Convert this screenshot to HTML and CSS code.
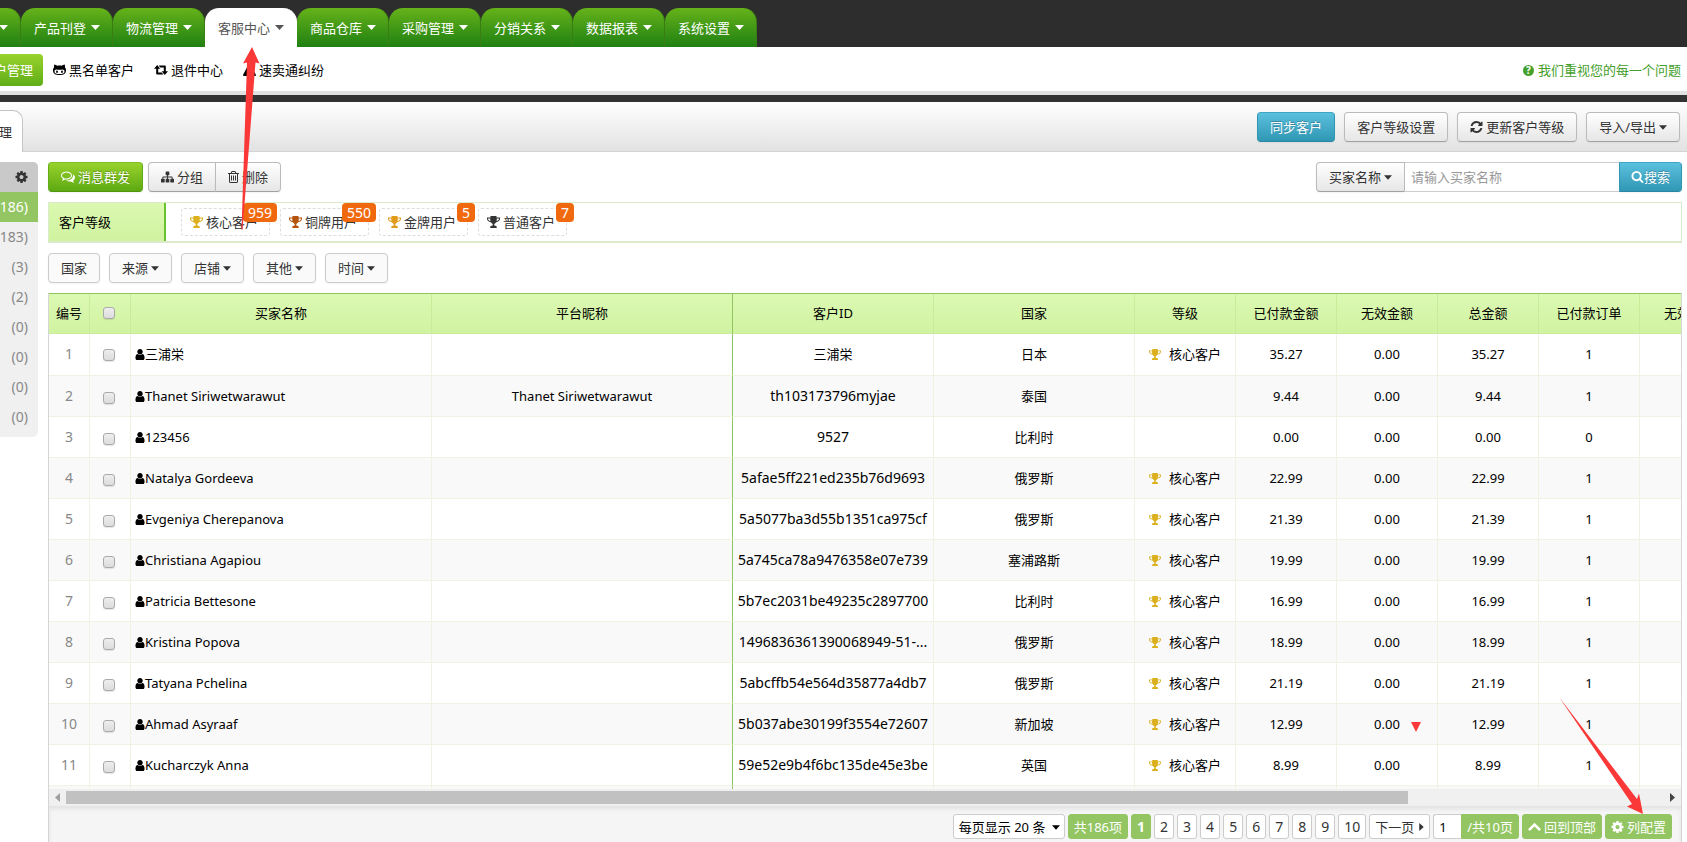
FILE: index.html
```html
<!DOCTYPE html>
<html lang="zh-CN">
    <head>
        <meta charset="utf-8">
        <title>客户管理</title>
        <link rel="stylesheet" href="styles.css">
    </head>
    <body>
        <svg class="sprite" width="0" height="0">
            <symbol id="caret" viewBox="0 0 9 5"><path d="M0 0h9L4.500 5z"/></symbol>
            <symbol id="caret-right" viewBox="0 0 5 9"><path d="M0 0v9l5-4.500z"/></symbol>
            <symbol id="caret-left" viewBox="0 0 5 9"><path d="M5 0v9L0 4.500z"/></symbol>
            <symbol id="user" viewBox="192 128 1408 1536"><path d="M1536 1399q0 109-62.500 187t-150.500 78h-854q-88 0-150.500-78t-62.500-187q0-85 8.500-160.500t31.500-152 58.500-131 94-89 134.500-34.500q131 128 313 128t313-128q76 0 134.500 34.500t94 89 58.500 131 31.500 152 8.500 160.500zm-256-887q0 159-112.500 271.500t-271.500 112.500-271.500-112.500-112.500-271.500 112.500-271.500 271.500-112.500 271.500 112.500 112.500 271.500z"/></symbol>
            <symbol id="trophy" viewBox="0 0 13 12"><path d="M3.500 0h6v1.500H13v1.300c0 1.900-1.700 3.200-3.900 3.500-.5.900-1.100 1.400-1.800 1.700v1.600c1.500.1 2.400.6 2.400 1.400v1H3.300v-1c0-.8.900-1.300 2.400-1.400V8c-.7-.3-1.300-.8-1.800-1.700C1.700 6 0 4.700 0 2.800V1.500h3.500zM1.100 2.500v.4c0 1 .9 1.900 2.400 2.200-.2-.7-.3-1.600-.3-2.600zm8.700 0c0 1-.1 1.900-.3 2.600 1.500-.3 2.400-1.200 2.400-2.200v-.4z"/></symbol>
            <symbol id="cog" viewBox="128 128 1536 1536"><path d="M1152 896q0-106-75-181t-181-75-181 75-75 181 75 181 181 75 181-75 75-181zm512-109v222q0 12-8 23t-20 13l-185 28q-19 54-39 91 35 50 107 138 10 12 10 25t-9 23q-27 37-99 108t-94 71q-12 0-26-9l-138-108q-44 23-91 38-16 136-29 186-7 28-36 28h-222q-14 0-24.500-8.500t-11.500-21.500l-28-184q-49-16-90-37l-141 107q-10 9-25 9-14 0-25-11-126-114-165-168-7-10-7-23 0-12 8-23 15-21 51-66.500t54-70.500q-27-50-41-99l-183-27q-13-2-21-12.500t-8-23.500v-222q0-12 8-23t19-13l186-28q14-46 39-92-40-57-107-138-10-12-10-24 0-10 9-23 26-36 98.500-107.500t94.500-71.500q13 0 26 10l138 107q44-23 91-38 16-136 29-186 7-28 36-28h222q14 0 24.500 8.500t11.500 21.500l28 184q49 16 90 37l142-107q9-9 24-9 13 0 25 10 129 119 165 170 7 8 7 22 0 12-8 23-15 21-51 66.500t-54 70.500q26 50 41 98l183 28q13 2 21 12.500t8 23.500z"/></symbol>
            <symbol id="search" viewBox="64 128 1664 1664"><path d="M1216 832q0-185-131.500-316.500t-316.500-131.500-316.500 131.500-131.500 316.500 131.500 316.500 316.500 131.500 316.500-131.500 131.500-316.500zm512 832q0 52-38 90t-90 38q-54 0-90-38l-343-342q-179 124-399 124-143 0-273.500-55.500t-225-150-150-225-55.500-273.500 55.500-273.500 150-225 225-150 273.500-55.500 273.500 55.500 225 150 150 225 55.500 273.500q0 220-124 399l343 343q37 37 37 90z"/></symbol>
            <symbol id="refresh" viewBox="128 128 1536 1536"><path d="M1639 1056q0 5-1 7-64 268-268 434.500t-478 166.500q-146 0-282.500-55t-243.500-157l-129 129q-19 19-45 19t-45-19-19-45v-448q0-26 19-45t45-19h448q26 0 45 19t19 45-19 45l-137 137q71 66 161 102t187 36q134 0 250-65t186-179q11-17 53-117 8-23 30-23h192q13 0 22.500 9.500t9.500 22.500zm25-800v448q0 26-19 45t-45 19h-448q-26 0-45-19t-19-45 19-45l138-138q-148-137-349-137-134 0-250 65t-186 179q-11 17-53 117-8 23-30 23h-199q-13 0-22.500-9.500t-9.500-22.500v-7q65-268 270-434.500t480-166.500q146 0 284 55.500t245 156.500l130-129q19-19 45-19t45 19 19 45z"/></symbol>
            <symbol id="sitemap" viewBox="0 128 1792 1536"><path d="M1792 1248v320q0 40-28 68t-68 28h-320q-40 0-68-28t-28-68v-320q0-40 28-68t68-28h96v-192h-512v192h96q40 0 68 28t28 68v320q0 40-28 68t-68 28h-320q-40 0-68-28t-28-68v-320q0-40 28-68t68-28h96v-192h-512v192h96q40 0 68 28t28 68v320q0 40-28 68t-68 28h-320q-40 0-68-28t-28-68v-320q0-40 28-68t68-28h96v-192q0-52 38-90t90-38h512v-192h-96q-40 0-68-28t-28-68v-320q0-40 28-68t68-28h320q40 0 68 28t28 68v320q0 40-28 68t-68 28h-96v192h512q52 0 90 38t38 90v192h96q40 0 68 28t28 68z"/></symbol>
            <symbol id="trash" viewBox="192 128 1408 1536"><path d="M576 704h128v640H576zM832 704h128v640H832zM1088 704h128v640h-128zM1344 1460v-948h-896v948q0 22 7 40.500t14.500 27 10.500 8.500h832q3 0 10.500-8.500t14.500-27 7-40.500zm-672-1076h448l-48-117q-7-9-17-11h-317q-10 2-17 11zm928 32v64q0 14-9 23t-23 9h-96v948q0 83-47 143.500t-113 60.500h-832q-66 0-113-58.500t-47-141.500v-952h-96q-14 0-23-9t-9-23v-64q0-14 9-23t23-9h309l70-167q15-37 54-63t79-26h320q40 0 79 26t54 63l70 167h309q14 0 23 9t9 23z"/></symbol>
            <symbol id="comments" viewBox="0 256 1792 1408"><path d="M704 384q-153 0-286 52t-211.500 141-78.500 191q0 82 53 158t149 132l97 56-35 84q34-20 62-39l44-31 53 10q78 14 153 14 153 0 286-52t211.500-141 78.500-191-78.500-191-211.500-141-286-52zm0-128q191 0 353.500 68.500t256.500 186.500 94 257-94 257-256.500 186.500-353.500 68.500q-86 0-176-16-124 88-278 128-36 9-86 16h-3q-11 0-20.500-8t-11.500-21q-1-3-1-6.500t.5-6.500 2-6l2.500-5 3.500-5.500 4-5 4.500-5 4-4.500q5-6 23-25t26-29.500 22.500-29 25-38.500 20.500-44q-124-72-195-177t-71-224q0-139 94-257t256.500-186.500 353.500-68.500zm822 1169q10 24 20.500 44t25 38.500 22.500 29 26 29.500 23 25q1 1 4 4.500t4.500 5 4 5 3.500 5.500l2.500 5 2 6 .5 6.500-1 6.500q-3 14-13 22t-22 7q-50-7-86-16-154-40-278-128-90 16-176 16-271 0-472-132 58 4 88 4 161 0 309-45t264-129q125-92 192-212t67-254q0-77-23-152 129 71 204 178t75 230q0 120-71 224.500t-195 176.500z"/></symbol>
            <symbol id="cat" viewBox="0 0 13 11"><path fill-rule="evenodd" d="M1.300 0C2.400.1 3.400.7 4.100 1.300c1.500-.3 3.300-.3 4.800 0C9.600.7 10.600.1 11.700 0c.4 1 .4 2 .2 2.800C12.700 3.600 13 4.600 13 5.800c0 3.700-2.300 4.700-6.500 4.700S0 9.500 0 5.800c0-1.200.3-2.200 1.100-3C.9 2 .9 1 1.300 0zM3.500 5C2.200 5 1.500 5.900 1.500 7c0 2 1.600 2.500 5 2.500s5-.5 5-2.500c0-1.100-.7-2-2-2-1 0-2 .3-3 .3S4.500 5 3.500 5z"/><ellipse cx="4" cy="7.200" rx=".9" ry="1.300"/><ellipse cx="9" cy="7.200" rx=".9" ry="1.300"/></symbol>
            <symbol id="retweet" viewBox="0 0 14 10"><path d="M3.200 0 6.300 3.700H4.200v3.800h3.600L9.400 9.500H3c-.5 0-.8-.3-.8-.8v-5H0zM4.700.5H11c.5 0 .8.3.8.8v5H14L10.800 10 7.700 6.300h2.100V2.500H6.300z"/></symbol>
            <symbol id="warning" viewBox="0 0 13 12"><path fill-rule="evenodd" d="M6.500 0c.4 0 .7.200.9.500l5.400 10c.4.700-.1 1.500-.9 1.500H1.100c-.8 0-1.300-.8-.9-1.500l5.400-10c.2-.3.5-.5.9-.5zM5.600 4l.2 4h1.400l.2-4zm.1 4.800v1.500h1.600V8.800z"/></symbol>
            <symbol id="chevron-up" viewBox="0 0 12 8"><path d="M6 0l6 6-1.700 1.700L6 3.500 1.700 7.700 0 6z"/></symbol>
        </svg>

        <header class="topbar">
            <nav class="menu">
                <a href="#">订单处理<svg class="caret"><use href="#caret"/></svg></a>
                <a href="#">产品刊登<svg class="caret"><use href="#caret"/></svg></a>
                <a href="#">物流管理<svg class="caret"><use href="#caret"/></svg></a>
                <a href="#" class="active">客服中心<svg class="caret"><use href="#caret"/></svg></a>
                <a href="#">商品仓库<svg class="caret"><use href="#caret"/></svg></a>
                <a href="#">采购管理<svg class="caret"><use href="#caret"/></svg></a>
                <a href="#">分销关系<svg class="caret"><use href="#caret"/></svg></a>
                <a href="#">数据报表<svg class="caret"><use href="#caret"/></svg></a>
                <a href="#">系统设置<svg class="caret"><use href="#caret"/></svg></a>
            </nav>
        </header>

        <nav class="subnav">
            <a href="#" class="current">客户管理</a>
            <a href="#"><svg class="icon"><use href="#cat"/></svg>黑名单客户</a>
            <a href="#"><svg class="icon icon-wide"><use href="#retweet"/></svg>退件中心</a>
            <a href="#"><svg class="icon"><use href="#warning"/></svg>速卖通纠纷</a>
            <a href="#" class="feedback"><span class="question">?</span>我们重视您的每一个问题</a>
        </nav>

        <div class="pagebar">
            <a href="#" class="pagetab">客户管理</a>
            <div class="actions">
                <button class="btn btn-blue">同步客户</button>
                <button class="btn">客户等级设置</button>
                <button class="btn"><svg class="icon"><use href="#refresh"/></svg>更新客户等级</button>
                <button class="btn">导入/导出<svg class="caret caret-small"><use href="#caret"/></svg></button>
            </div>
        </div>

        <div class="layout">
            <aside class="sidebar">
                <button class="side-head" aria-label="设置"><svg class="icon"><use href="#cog"/></svg></button>
                <a href="#" class="active">(186)</a>
                <a href="#">(183)</a>
                <a href="#">(3)</a>
                <a href="#">(2)</a>
                <a href="#">(0)</a>
                <a href="#">(0)</a>
                <a href="#">(0)</a>
                <a href="#">(0)</a>
            </aside>

            <main class="content">
                <div class="toolbar">
                    <button class="btn btn-green"><svg class="icon icon-wide"><use href="#comments"/></svg>消息群发</button>
                    <div class="group">
                        <button class="btn"><svg class="icon"><use href="#sitemap"/></svg>分组</button>
                        <button class="btn"><svg class="icon icon-narrow"><use href="#trash"/></svg>删除</button>
                    </div>
                    <form class="group search">
                        <button type="button" class="btn">买家名称<svg class="caret caret-small"><use href="#caret"/></svg></button>
                        <input type="text" placeholder="请输入买家名称" aria-label="买家名称">
                        <button type="button" class="btn btn-blue"><svg class="icon"><use href="#search"/></svg>搜索</button>
                    </form>
                </div>

                <div class="levels">
                    <div class="levels-title">客户等级</div>
                    <div class="levels-list">
                        <a href="#"><svg class="icon gold"><use href="#trophy"/></svg>核心客户<span class="badge">959</span></a>
                        <a href="#"><svg class="icon bronze"><use href="#trophy"/></svg>铜牌用户<span class="badge">550</span></a>
                        <a href="#"><svg class="icon amber"><use href="#trophy"/></svg>金牌用户<span class="badge">5</span></a>
                        <a href="#"><svg class="icon"><use href="#trophy"/></svg>普通客户<span class="badge">7</span></a>
                    </div>
                </div>

                <div class="filters">
                    <button class="btn">国家</button>
                    <button class="btn">来源<svg class="caret caret-small"><use href="#caret"/></svg></button>
                    <button class="btn">店铺<svg class="caret caret-small"><use href="#caret"/></svg></button>
                    <button class="btn">其他<svg class="caret caret-small"><use href="#caret"/></svg></button>
                    <button class="btn">时间<svg class="caret caret-small"><use href="#caret"/></svg></button>
                </div>

                <div class="panel">
                    <div class="table-wrap">
                        <table>
                            <colgroup>
                                <col class="w-no"><col class="w-no"><col class="w-name"><col class="w-name">
                                <col class="w-id"><col class="w-id">
                                <col class="w-num"><col class="w-num"><col class="w-num"><col class="w-num"><col class="w-num"><col class="w-num">
                            </colgroup>
                            <thead>
                                <tr><th>编号</th><th class="check"><input type="checkbox" aria-label="全选"></th><th>买家名称</th><th class="frozen">平台昵称</th><th>客户ID</th><th>国家</th><th>等级</th><th>已付款金额</th><th>无效金额</th><th>总金额</th><th>已付款订单</th><th>无效订单</th></tr>
                            </thead>
                            <tbody>
                                <tr><td class="no">1</td><td class="check"><input type="checkbox" aria-label="1"></td><td class="name"><svg class="user"><use href="#user"/></svg>三浦栄</td><td class="frozen"></td><td>三浦栄</td><td>日本</td><td><svg class="cup"><use href="#trophy"/></svg>核心客户</td><td>35.27</td><td>0.00</td><td>35.27</td><td>1</td><td></td></tr>
                                <tr><td class="no">2</td><td class="check"><input type="checkbox" aria-label="2"></td><td class="name"><svg class="user"><use href="#user"/></svg>Thanet Siriwetwarawut</td><td class="frozen">Thanet Siriwetwarawut</td><td class="code">th103173796myjae</td><td>泰国</td><td></td><td>9.44</td><td>0.00</td><td>9.44</td><td>1</td><td></td></tr>
                                <tr><td class="no">3</td><td class="check"><input type="checkbox" aria-label="3"></td><td class="name"><svg class="user"><use href="#user"/></svg>123456</td><td class="frozen"></td><td class="code">9527</td><td>比利时</td><td></td><td>0.00</td><td>0.00</td><td>0.00</td><td>0</td><td></td></tr>
                                <tr><td class="no">4</td><td class="check"><input type="checkbox" aria-label="4"></td><td class="name"><svg class="user"><use href="#user"/></svg>Natalya Gordeeva</td><td class="frozen"></td><td class="code">5afae5ff221ed235b76d9693</td><td>俄罗斯</td><td><svg class="cup"><use href="#trophy"/></svg>核心客户</td><td>22.99</td><td>0.00</td><td>22.99</td><td>1</td><td></td></tr>
                                <tr><td class="no">5</td><td class="check"><input type="checkbox" aria-label="5"></td><td class="name"><svg class="user"><use href="#user"/></svg>Evgeniya Cherepanova</td><td class="frozen"></td><td class="code">5a5077ba3d55b1351ca975cf</td><td>俄罗斯</td><td><svg class="cup"><use href="#trophy"/></svg>核心客户</td><td>21.39</td><td>0.00</td><td>21.39</td><td>1</td><td></td></tr>
                                <tr><td class="no">6</td><td class="check"><input type="checkbox" aria-label="6"></td><td class="name"><svg class="user"><use href="#user"/></svg>Christiana Agapiou</td><td class="frozen"></td><td class="code">5a745ca78a9476358e07e739</td><td>塞浦路斯</td><td><svg class="cup"><use href="#trophy"/></svg>核心客户</td><td>19.99</td><td>0.00</td><td>19.99</td><td>1</td><td></td></tr>
                                <tr><td class="no">7</td><td class="check"><input type="checkbox" aria-label="7"></td><td class="name"><svg class="user"><use href="#user"/></svg>Patricia Bettesone</td><td class="frozen"></td><td class="code">5b7ec2031be49235c2897700</td><td>比利时</td><td><svg class="cup"><use href="#trophy"/></svg>核心客户</td><td>16.99</td><td>0.00</td><td>16.99</td><td>1</td><td></td></tr>
                                <tr><td class="no">8</td><td class="check"><input type="checkbox" aria-label="8"></td><td class="name"><svg class="user"><use href="#user"/></svg>Kristina Popova</td><td class="frozen"></td><td class="code">1496836361390068949-51-...</td><td>俄罗斯</td><td><svg class="cup"><use href="#trophy"/></svg>核心客户</td><td>18.99</td><td>0.00</td><td>18.99</td><td>1</td><td></td></tr>
                                <tr><td class="no">9</td><td class="check"><input type="checkbox" aria-label="9"></td><td class="name"><svg class="user"><use href="#user"/></svg>Tatyana Pchelina</td><td class="frozen"></td><td class="code">5abcffb54e564d35877a4db7</td><td>俄罗斯</td><td><svg class="cup"><use href="#trophy"/></svg>核心客户</td><td>21.19</td><td>0.00</td><td>21.19</td><td>1</td><td></td></tr>
                                <tr><td class="no">10</td><td class="check"><input type="checkbox" aria-label="10"></td><td class="name"><svg class="user"><use href="#user"/></svg>Ahmad Asyraaf</td><td class="frozen"></td><td class="code">5b037abe30199f3554e72607</td><td>新加坡</td><td><svg class="cup"><use href="#trophy"/></svg>核心客户</td><td>12.99</td><td>0.00</td><td>12.99</td><td>1</td><td></td></tr>
                                <tr><td class="no">11</td><td class="check"><input type="checkbox" aria-label="11"></td><td class="name"><svg class="user"><use href="#user"/></svg>Kucharczyk Anna</td><td class="frozen"></td><td class="code">59e52e9b4f6bc135de45e3be</td><td>英国</td><td><svg class="cup"><use href="#trophy"/></svg>核心客户</td><td>8.99</td><td>0.00</td><td>8.99</td><td>1</td><td></td></tr>
                                <tr><td></td><td></td><td></td><td class="frozen"></td><td></td><td></td><td></td><td></td><td></td><td></td><td></td><td></td></tr>
                            </tbody>
                        </table>
                    </div>
                    <div class="scrollbar">
                        <svg class="scroll-arrow dim"><use href="#caret-left"/></svg>
                        <div class="track"><div class="thumb"></div></div>
                        <svg class="scroll-arrow"><use href="#caret-right"/></svg>
                    </div>
                    <div class="pager">
                        <span class="page-size">
                            <select aria-label="每页显示"><option>每页显示 20 条</option></select>
                            <svg class="caret caret-small"><use href="#caret"/></svg>
                        </span>
                        <span class="page green">共186项</span>
                        <button class="page num green current">1</button>
                        <button class="page num">2</button>
                        <button class="page num">3</button>
                        <button class="page num">4</button>
                        <button class="page num">5</button>
                        <button class="page num">6</button>
                        <button class="page num">7</button>
                        <button class="page num">8</button>
                        <button class="page num">9</button>
                        <button class="page num">10</button>
                        <button class="page">下一页<svg class="next"><use href="#caret-right"/></svg></button>
                        <span class="goto"><input type="text" value="1" aria-label="页码"><span class="page green">/共10页</span></span>
                        <button class="page green"><svg class="icon"><use href="#chevron-up"/></svg>回到顶部</button>
                        <button class="page green"><svg class="icon"><use href="#cog"/></svg>列配置</button>
                    </div>
                </div>
            </main>
        </div>

        <!-- red guide marks over the page -->
        <svg class="mark mark-menu" viewBox="0 0 20 186"><path d="M11 0l7.500 16.500-4-1L1.500 183 .5 182 6 15.500 2 16.500z"/></svg>
        <svg class="mark mark-sort" viewBox="0 0 10 10"><path d="M0 0h10L5 10z"/></svg>
        <svg class="mark mark-config" viewBox="0 0 86 118"><path d="M0 0l78 102 2-5.500L84 117 68 109.500l5-2.500z"/></svg>
    </body>
</html>
```
FILE: styles.css
```css
*{
    box-sizing: border-box;
}
body{
    margin: 0;
    height: 100vh;
    display: flex;
    flex-direction: column;
    overflow: hidden;
    font-family: "Noto Sans", "Noto Sans CJK SC", sans-serif;
    font-size: 13px;
    line-height: 20px;
    color: #333;
    background: #fff;
}
a{
    color: inherit;
    text-decoration: none;
}
button, input, select{
    font: inherit;
    color: inherit;
    margin: 0;
}
button{
    cursor: pointer;
}
svg{
    fill: currentColor;
    flex: none;
}
.sprite{
    position: absolute;
}
.icon{
    width: 13px;
    height: 12px;
    margin-right: 3px;
}
.icon-wide{
    width: 14px;
}
.icon-narrow{
    width: 11px;
}
.caret{
    width: 9px;
    height: 5px;
    margin-left: 5px;
}
.caret-small{
    width: 8px;
    margin-left: 3px;
}

/* top menu */
.topbar{
    background: #2d2d2d;
    padding-top: 8px;
    flex: none;
}
.menu{
    display: flex;
    margin-left: -71px;
}
.menu a{
    display: flex;
    align-items: center;
    width: 92px;
    height: 39px;
    flex: none;
    padding-left: 13px;
    color: #fff;
    border-right: 1px solid #3a7d12;
    border-radius: 14px 14px 0 0;
    background: linear-gradient(#66b21a, #1f8012);
}
.menu a.active{
    background: #fff;
    color: #555;
    border-right-color: #fff;
}

.subnav{
    display: flex;
    align-items: center;
    flex: none;
    height: 48px;
    padding-top: 2px;
    padding-right: 6px;
    color: #000;
    border-bottom: 4px solid #e2e2e2;
}
.subnav a{
    display: flex;
    align-items: center;
    margin-right: 20px;
}
.subnav .current{
    width: 43px;
    height: 32px;
    margin-right: 10px;
    padding-right: 10px;
    justify-content: flex-end;
    white-space: nowrap;
    overflow: hidden;
    color: #fff;
    border-radius: 0 4px 4px 0;
    background: linear-gradient(#98d22c, #60ad18);
}
.subnav .feedback{
    margin-left: auto;
    margin-right: 0;
    color: #45a02c;
}
.question{
    width: 11px;
    height: 11px;
    margin-right: 4px;
    border-radius: 50%;
    background: #45a02c;
    color: #fff;
    font-size: 10px;
    font-weight: bold;
    line-height: 11px;
    text-align: center;
}

.pagebar{
    display: flex;
    justify-content: space-between;
    align-items: flex-end;
    flex: none;
    height: 57px;
    padding-right: 7px;
    border-top: 7px solid #333;
    border-bottom: 1px solid #d4d4d4;
    background: linear-gradient(#fff, #e2e2e2);
}
.pagetab{
    display: flex;
    justify-content: flex-end;
    align-items: center;
    width: 23px;
    height: 42px;
    margin-bottom: -1px;
    padding-right: 10px;
    white-space: nowrap;
    overflow: hidden;
    background: #fff;
    border: 1px solid #c4c4c4;
    border-width: 1px 1px 0 0;
    border-radius: 0 10px 0 0;
}
.actions{
    display: flex;
    gap: 9px;
    padding-bottom: 9px;
}

.btn{
    display: flex;
    align-items: center;
    height: 30px;
    padding: 0 12px;
    white-space: nowrap;
    border: 1px solid #bbb;
    border-bottom-color: #a2a2a2;
    border-radius: 4px;
    background: linear-gradient(#fff, #e6e6e6);
    box-shadow: 0 1px 2px rgba(0, 0, 0, 0.05);
}
.btn-blue{
    color: #fff;
    border-color: #3fa5c4 #2f96b4 #2a87a3;
    background: linear-gradient(#5bc0de, #2f96b4);
    text-shadow: 0 -1px 0 rgba(0, 0, 0, 0.25);
}
.btn-green{
    color: #fff;
    border-color: #7fc022 #60ad18 #52930f;
    background: linear-gradient(#98d22c, #5da912);
    text-shadow: 0 -1px 0 rgba(0, 0, 0, 0.25);
}

.layout{
    display: flex;
    flex: 1;
    min-height: 0;
    gap: 10px;
    padding: 10px 5px 0 0;
}

/* left list */
.sidebar{
    width: 38px;
    flex: none;
    align-self: flex-start;
    padding-bottom: 5px;
    overflow: hidden;
    color: #888;
    background: #f0f0f0;
    border-radius: 0 5px 5px 0;
    font-size: 14px;
}
.sidebar a, .side-head{
    display: flex;
    justify-content: flex-end;
    align-items: center;
    width: 100%;
    height: 30px;
    padding: 0 10px 0 0;
}
.sidebar .active{
    color: #fff;
    background: #93c662;
}
.side-head{
    border: none;
    color: #333;
    background: #c9c9c9;
}
.side-head .icon{
    margin-right: 0;
}

.content{
    flex: 1;
    min-width: 0;
    display: flex;
    flex-direction: column;
    gap: 10px;
}
.toolbar{
    display: flex;
    gap: 5px;
}
.group{
    display: flex;
}
.group .btn:first-child{
    border-radius: 4px 0 0 4px;
}
.group .btn:last-child{
    border-radius: 0 4px 4px 0;
    margin-left: -1px;
}
.search{
    margin-left: auto;
}
.search input{
    width: 215px;
    height: 30px;
    padding: 0 6px;
    border: 1px solid #ccc;
    border-left: none;
    outline: none;
}
.search input::placeholder{
    color: #999;
}
.search .icon{
    margin-right: 0;
}
.search .btn-blue{
    padding: 0 11px;
}

/* customer levels */
.levels{
    display: flex;
    height: 41px;
    border: 1px solid #dbeacb;
    border-bottom-width: 2px;
}
.levels-title{
    width: 117px;
    padding: 9px 10px;
    color: #000;
    border-right: 2px solid #69c132;
    background: linear-gradient(#dbf9b0, #d0f2a0);
}
.levels-list{
    display: flex;
    align-items: center;
    gap: 10px;
    padding-left: 15px;
}
.levels-list a{
    position: relative;
    display: flex;
    align-items: center;
    width: 89px;
    height: 28px;
    padding-left: 8px;
    border: 1px dashed #ddd;
    border-radius: 3px;
}
.badge{
    position: absolute;
    top: -6px;
    right: -8px;
    padding: 0 5px;
    color: #fff;
    background: #f0690f;
    border-radius: 4px;
    font-size: 14px;
    line-height: 19px;
}
.gold, .cup{
    color: #dbb01c;
}
.bronze{
    color: #b4540c;
}
.amber{
    color: #e09a1c;
}

.filters{
    display: flex;
    gap: 9px;
}
.filters .btn{
    background: #fafafa;
    border-color: #ccc;
}

/* customer table */
.panel{
    flex: 1;
    min-height: 0;
    display: flex;
    flex-direction: column;
    border: 1px solid #d5d5d5;
    border-width: 0 1px;
}
.table-wrap{
    flex: 1;
    min-height: 0;
    overflow: hidden;
    border-top: 1px solid #8fc65f;
}
table{
    width: 1692px;
    table-layout: fixed;
    border-spacing: 0;
    color: #000;
}
.w-no{
    width: 41px;
}
.w-name{
    width: 301px;
}
.w-id{
    width: 201px;
}
.w-num{
    width: 101px;
}
th{
    height: 40px;
    padding: 0 0 2px;
    font-weight: normal;
    white-space: nowrap;
    border-right: 1px solid #c8ec9a;
    border-bottom: 1px solid #c8ec9a;
    background: linear-gradient(#dcf9b3, #d0f3a1);
}
td{
    height: 41px;
    padding: 0;
    text-align: center;
    white-space: nowrap;
    border-right: 1px solid #eef3e2;
    border-bottom: 1px solid #eef3e2;
}
tbody tr:first-child td{
    height: 42px;
    padding-bottom: 2px;
}
tbody tr:nth-child(even){
    background: #f9f9f9;
}
.frozen{
    border-right-color: #8fc65f;
}
.no{
    color: #888;
}
.no, .code{
    font-size: 14px;
}
.name{
    padding-left: 4px;
    text-align: left;
}
.user{
    width: 10px;
    height: 11px;
    vertical-align: -1px;
}
.cup{
    width: 12px;
    height: 11px;
    margin-right: 8px;
    vertical-align: -1px;
}
input[type=checkbox]{
    appearance: none;
    display: block;
    width: 12px;
    height: 12px;
    margin: 0 auto;
    border: 1px solid #aaa;
    border-radius: 3px;
    background: linear-gradient(#eee, #dcdcdc);
    box-shadow: 0 1px 1px rgba(0, 0, 0, 0.1);
}
.check{
    padding-right: 3px;
}
td.check{
    padding-top: 3px;
}

.scrollbar{
    display: flex;
    align-items: center;
    height: 17px;
    flex: none;
    background: #f0f0f0;
    color: #444;
}
.scroll-arrow{
    width: 5px;
    height: 9px;
    margin: 0 6px;
}
.scroll-arrow.dim{
    color: #a0a0a0;
}
.track{
    flex: 1;
    height: 13px;
}
.thumb{
    width: 84%;
    height: 100%;
    background: #c1c1c1;
}

.pager{
    display: flex;
    justify-content: flex-end;
    gap: 3px;
    flex: none;
    padding: 8px 9px 3px 0;
    background: #f5f5f5;
    box-shadow: inset 0 3px 4px rgba(0, 0, 0, 0.08);
}
.pager .page, .pager select, .pager input{
    display: flex;
    align-items: center;
    height: 25px;
    padding: 0 5px;
    white-space: nowrap;
    border: 1px solid #ccc;
    border-radius: 3px;
    background: #fff;
}
.pager .num{
    font-size: 14px;
}
.pager .page.green{
    color: #fff;
    border-color: #93c662;
    background: #93c662;
}
.pager .current{
    font-weight: bold;
}
.page-size{
    position: relative;
    color: #000;
}
.pager select{
    appearance: none;
    width: 112px;
}
.page-size .caret{
    position: absolute;
    right: 5px;
    top: 11px;
    pointer-events: none;
}
.next{
    width: 5px;
    height: 8px;
    margin-left: 5px;
}
.goto{
    display: flex;
    color: #000;
}
.goto input{
    width: 28px;
    border-right: none;
    border-radius: 3px 0 0 3px;
}
.goto .page{
    border-radius: 0 3px 3px 0;
}

/* guide marks */
.mark{
    position: absolute;
    color: #fb3838;
    pointer-events: none;
}
.mark-menu{
    left: 241px;
    top: 47px;
    width: 20px;
    height: 186px;
}
.mark-sort{
    left: 1411px;
    top: 722px;
    width: 10px;
    height: 10px;
}
.mark-config{
    left: 1559px;
    top: 697px;
    width: 86px;
    height: 118px;
}
```
